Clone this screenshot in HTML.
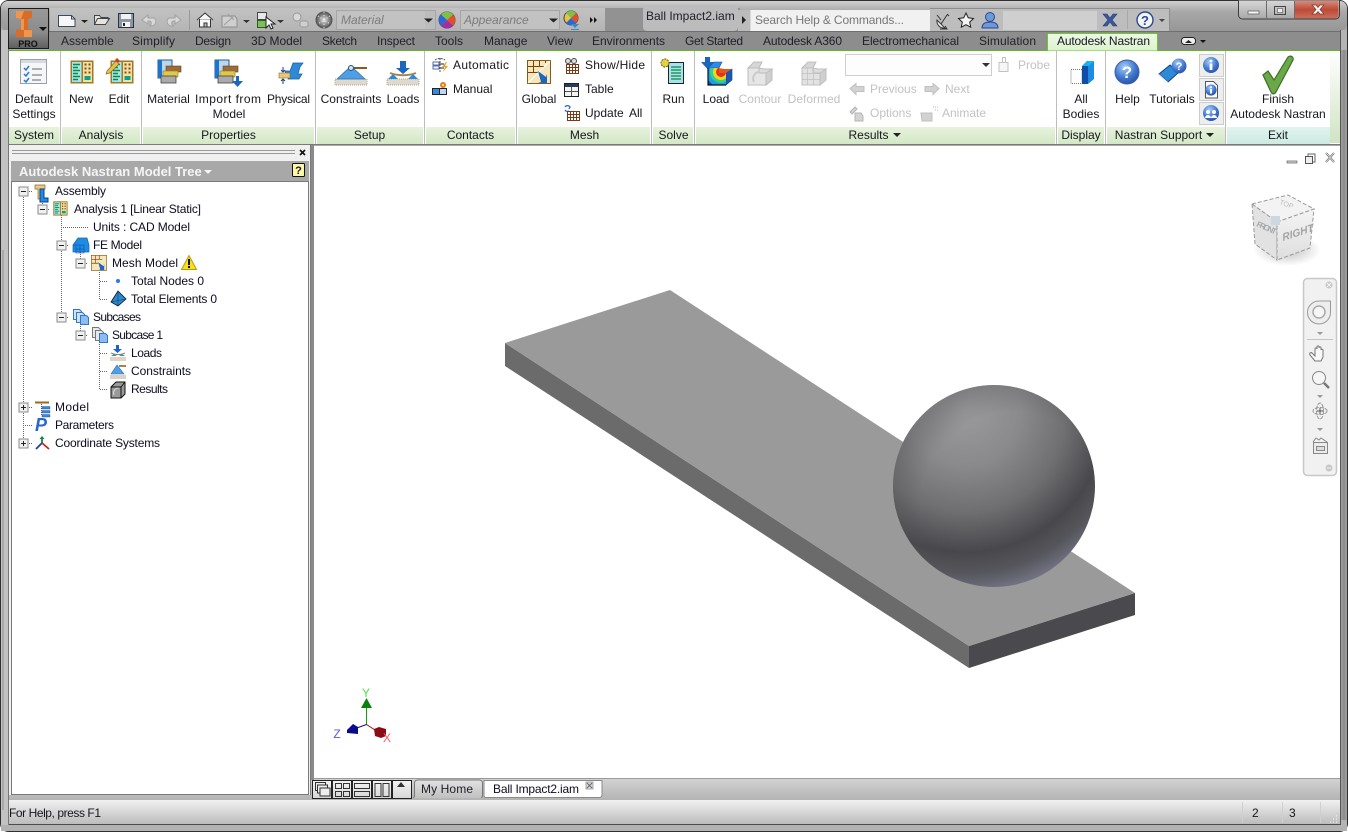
<!DOCTYPE html>
<html lang="en"><head><meta charset="utf-8"><title>Ball Impact2.iam</title>
<style>
html,body{margin:0;padding:0;background:#fff;width:1348px;height:832px;overflow:hidden}
svg{display:block}
text{font-family:"Liberation Sans",sans-serif;font-size:12px;fill:#16161e}
.m{text-anchor:middle}
.g{fill:#c2c2c2}
.tr{fill:#0c0c20}
.tb{fill:#202028}
</style></head><body>
<svg xmlns="http://www.w3.org/2000/svg" width="1348" height="832" viewBox="0 0 1348 832">
<defs>
<linearGradient id="top" x1="0" y1="0" x2="0" y2="1"><stop offset="0" stop-color="#d0d0d0"/><stop offset=".35" stop-color="#a8a8a8"/><stop offset="1" stop-color="#979797"/></linearGradient>
<linearGradient id="qat" x1="0" y1="0" x2="0" y2="1"><stop offset="0" stop-color="#c2c2c2"/><stop offset="1" stop-color="#b4b4b4"/></linearGradient>
<linearGradient id="pl" x1="0" y1="0" x2="0" y2="1"><stop offset="0" stop-color="#e7f2dc"/><stop offset="1" stop-color="#d3e8c6"/></linearGradient>
<linearGradient id="plx" x1="0" y1="0" x2="0" y2="1"><stop offset="0" stop-color="#e2f3ee"/><stop offset="1" stop-color="#cdeae3"/></linearGradient>
<linearGradient id="atab" x1="0" y1="0" x2="0" y2="1"><stop offset="0" stop-color="#eef8e6"/><stop offset="1" stop-color="#dcf3cd"/></linearGradient>
<linearGradient id="edge" x1="0" y1="0" x2="0" y2="1"><stop offset="0" stop-color="#fff"/><stop offset="1" stop-color="#d0e4c4"/></linearGradient>
<linearGradient id="app" x1="0" y1="0" x2="0" y2="1"><stop offset="0" stop-color="#9a9a9a"/><stop offset=".6" stop-color="#8b8b8b"/><stop offset="1" stop-color="#5e5e5e"/></linearGradient>
<linearGradient id="close" x1="0" y1="0" x2="0" y2="1"><stop offset="0" stop-color="#d68a7c"/><stop offset=".5" stop-color="#bf4a36"/><stop offset="1" stop-color="#c9705f"/></linearGradient>
<linearGradient id="ctl" x1="0" y1="0" x2="0" y2="1"><stop offset="0" stop-color="#d8d8d8"/><stop offset="1" stop-color="#a8a8a8"/></linearGradient>
<linearGradient id="strip" x1="0" y1="0" x2="0" y2="1"><stop offset="0" stop-color="#d2d2d2"/><stop offset="1" stop-color="#b4b4b4"/></linearGradient>
<linearGradient id="stat" x1="0" y1="0" x2="0" y2="1"><stop offset="0" stop-color="#f1f1f1"/><stop offset="1" stop-color="#bcbcbc"/></linearGradient>
<linearGradient id="tabg" x1="0" y1="0" x2="0" y2="1"><stop offset="0" stop-color="#e2e2e2"/><stop offset="1" stop-color="#c0c0c0"/></linearGradient>
<linearGradient id="btn" x1="0" y1="0" x2="0" y2="1"><stop offset="0" stop-color="#f4f4f4"/><stop offset="1" stop-color="#d6d6d6"/></linearGradient>
<linearGradient id="fr" x1="0" y1="0" x2="1" y2="0"><stop offset="0" stop-color="#9a9a9a"/><stop offset=".5" stop-color="#7e7e7e"/><stop offset="1" stop-color="#9c9c9c"/></linearGradient>
<radialGradient id="ball" gradientUnits="userSpaceOnUse" cx="965" cy="410" r="185"><stop offset="0" stop-color="#9b9b9e"/><stop offset=".3" stop-color="#8a8a8d"/><stop offset=".55" stop-color="#6f6f72"/><stop offset=".77" stop-color="#48484c"/><stop offset=".88" stop-color="#55555b"/><stop offset="1" stop-color="#77778a"/></radialGradient>
<radialGradient id="rim" cx=".6" cy=".6" r=".62"><stop offset=".75" stop-color="#555" stop-opacity="0"/><stop offset="1" stop-color="#555" stop-opacity=".35"/></radialGradient>
<radialGradient id="blue" cx=".4" cy=".3" r=".75"><stop offset="0" stop-color="#a7cdf6"/><stop offset=".6" stop-color="#3f78d0"/><stop offset="1" stop-color="#2a4f9e"/></radialGradient>
<radialGradient id="wheel" cx=".5" cy=".5" r=".5"><stop offset="0" stop-color="#e2e2e2"/><stop offset="1" stop-color="#555"/></radialGradient>
<radialGradient id="cs" cx=".5" cy=".5" r=".5"><stop offset="0" stop-color="#888" stop-opacity=".55"/><stop offset="1" stop-color="#888" stop-opacity="0"/></radialGradient>
<linearGradient id="cube" x1="0" y1="0" x2="0" y2="1"><stop offset="0" stop-color="#f4f4f4"/><stop offset="1" stop-color="#dedede"/></linearGradient>
<clipPath id="fc"><path d="M0 6H11V11H18V23H0Z"/></clipPath>

<g id="minus"><rect x="-4.5" y="-4.5" width="9" height="9" fill="#f0f0f0" stroke="#8a8a8a"/><path d="M-2.5 0h5" stroke="#222"/></g>
<g id="plus"><rect x="-4.5" y="-4.5" width="9" height="9" fill="#f0f0f0" stroke="#8a8a8a"/><path d="M-2.5 0h5M0-2.5v5" stroke="#222"/></g>
<g id="anal">
 <rect x=".5" y=".5" width="23" height="23" fill="#a07828"/>
 <rect x="2" y="2" width="9.5" height="20" fill="#a8e4f0"/>
 <rect x="13" y="2" width="9" height="20" fill="#f0e2a0"/>
 <path d="M3 4.5h7M3 7.5h5M3 10.5h7M3 13.5h5M3 16.5h7M3 19.5h5" stroke="#0a8a3c" stroke-width="1.4"/>
 <path d="M14.5 3.5h2v2h-2zM18.5 3.5h2v2h-2zM14.5 7.5h2v2h-2zM18.5 7.5h2v2h-2zM14.5 11.5h2v2h-2zM18.5 11.5h2v2h-2z" fill="#8c4a1a"/>
 <rect x="14.5" y="16" width="6" height="4" fill="#0aa08c"/>
</g>
<g id="matl">
 <path d="M1 1h14v18H1z" fill="#bcd6ee" stroke="#235a9c"/><rect x="1" y="1" width="4" height="18" fill="#1d74cc"/>
 <rect x="9" y="7" width="15" height="6" fill="#9c6b3a" stroke="#6a4422" stroke-width=".6"/>
 <rect x="6" y="12" width="15" height="6" fill="#e0c84a" stroke="#8a7a22" stroke-width=".6"/>
 <rect x="4" y="17" width="15" height="7" fill="#aaa" stroke="#444" stroke-width=".8"/>
</g>
<g id="tri">
 <path d="M-16 15h32v6h-32z" fill="#ddd5c6" opacity=".9"/>
 <path d="M-16 15h32v6h-32z" fill="none" stroke="#b5a690" stroke-dasharray="1 1"/>
</g>
<g id="grid">
 <path d="M2 .5h13M2 3.5h13M2 6.5h13M2 9.5h13M2.5 0v10M5.5 0v10M8.5 0v10M11.5 0v10M14.5 0v10" stroke="#7a3a18" stroke-width="1"/>
</g>
<g id="info"><circle cx="0" cy="0" r="8" fill="url(#blue)"/><circle cx="0" cy="-4" r="1.4" fill="#fff"/><rect x="-1.4" y="-1.5" width="2.8" height="6.5" fill="#fff"/></g>
</defs>

<!-- window frame -->
<rect width="1348" height="832" fill="#fff"/>
<rect x=".5" y=".5" width="1347" height="831" rx="8" fill="#a9a9a9" stroke="#2f2f2f"/>
<rect x="1" y="1" width="1346" height="30" rx="7" fill="url(#top)"/>
<rect x="1" y="30" width="8" height="795" fill="#c2c2c2"/>
<rect x="1340" y="30" width="7" height="795" fill="#b4b4b4"/>
<rect x="1" y="825" width="1346" height="6" fill="#b2b2b2"/>
<path d="M8 824.500H1340" stroke="#4c4c4c"/><path d="M1340.500 30V825" stroke="#555"/><path d="M8.500 30V825" stroke="#777"/>
<rect x="2" y="250" width="2" height="560" fill="#8a8a8a" opacity=".45"/>
<rect x="1341" y="50" width="6" height="770" fill="url(#fr)" opacity=".75"/>

<!-- QAT -->
<rect x="50" y="8" width="555" height="24" fill="url(#qat)"/>
<rect x="605" y="8" width="135" height="24" fill="#929292"/>
<rect x="643" y="5" width="95" height="26" rx="4" fill="#bcbcbc"/>
<rect x="738" y="10" width="432" height="22" fill="#bcbcbc"/>
<rect x="750" y="10" width="180" height="21" fill="#f1f1f1"/>
<path d="M750.500 10v21" stroke="#d8d8d8"/>
<rect x="930" y="8" width="240" height="24" fill="#bdbdbd"/>
<rect x="1003" y="11" width="94" height="19" fill="#cfcfcf"/>
<path d="M930 8.500h239.500V31" fill="none" stroke="#8e8e8e"/>
<path d="M1127.500 10v19" stroke="#a8a8a8"/>

<!-- app button -->
<rect x="8.500" y="8.500" width="40" height="40" fill="url(#app)" stroke="#1c1c1c"/>
<path d="M16 11h16v7l-4 1v10l4 1v7H16v-7l5-1V19l-5-1z" fill="#d96c26"/>
<path d="M16 11h8l-3 8-5-1zM24 30h8v7h-8zM21 19h3v11l-3 0z" fill="#f0964c"/>
<path d="M39 27h8l-4 4z" fill="#111"/>
<text x="28" y="47" class="m" style="font-size:9px;font-weight:bold;fill:#111">PRO</text>

<!-- QAT icons -->
<path d="M58.500 15.500h13l3.500 3.500v7.500h-16.500z" fill="#f7f7f7" stroke="#3c4a5c"/><path d="M71.500 15.500v3.500h3.500" fill="none" stroke="#3c4a5c"/>
<path d="M81 20h7l-3.500 3z" fill="#222"/>
<path d="M94.500 24.500v-9h5l1.500 2h7v2M94.500 24.500l3-6h12l-4 6z" fill="#e9e5d6" stroke="#3c4654"/>
<rect x="118.500" y="13.500" width="15" height="14" fill="#8d97a3" stroke="#2a3140"/><rect x="121" y="14" width="10" height="5" fill="#f1f1f1"/><rect x="122" y="22" width="8" height="5" fill="#f4f4f4"/><rect x="123" y="23" width="2" height="3" fill="#222"/>
<path d="M142 20l6-5v3h5c4 0 4 7-1 8h-3c3-1 3-5 0-5h-1v3z" fill="#d8d8d8" stroke="#a2a2a2"/>
<path d="M181 20l-6-5v3h-5c-4 0-4 7 1 8h3c-3-1-3-5 0-5h1v3z" fill="#d8d8d8" stroke="#a2a2a2"/>
<path d="M189.500 10v20" stroke="#9a9a9a"/>
<path d="M197 20l8-7 8 7M199.500 19v8h11v-8M204 27v-4h3v4" fill="#f7f7f7" stroke="#333"/>
<path d="M222 16h13l2 3v8h-15z" fill="#cfcfcf" stroke="#8c8c8c"/><path d="M224 25l9-8M228 14l6 6" stroke="#9e9e9e"/>
<path d="M243 20h7l-3.500 3z" fill="#333"/>
<rect x="257.500" y="12.500" width="9" height="7" fill="#e8e8e8" stroke="#444"/><rect x="257.500" y="20.500" width="9" height="7" fill="#7cc05a" stroke="#2c5e1c"/>
<path d="M266 17l0 11 3-3 2 4 2-1-2-4h4z" fill="#fff" stroke="#222"/>
<path d="M277 20h7l-3.500 3z" fill="#333"/>
<circle cx="297" cy="17" r="4" fill="#d8d8d8" stroke="#999"/><rect x="300" y="21" width="8" height="6" rx="2" fill="#cfcfcf" stroke="#999"/>
<circle cx="324" cy="20" r="8" fill="url(#wheel)" stroke="#555"/>
<path d="M318 16l12 8M330 16l-12 8M324 12v16" stroke="#eee" stroke-dasharray="1 2"/>
<rect x="336.500" y="10.500" width="99" height="19" fill="#c2c2c2" stroke="#a5a5a5"/><rect x="425" y="11" width="10" height="18" fill="#bcbcbc"/>
<path d="M424 18.500h9l-4.500 4z" fill="#222"/>
<text x="341" y="24" style="font-style:italic;fill:#7c7c7c">Material</text>
<circle cx="447" cy="20" r="8" fill="#e5c640" stroke="#444"/>
<path d="M447 20L441 14.500A8 8 0 0 1 453 14.500z" fill="#7fbf4a"/><path d="M447 20L453 14.500A8 8 0 0 1 453 25.500z" fill="#e0502a"/><path d="M447 20L453 25.500A8 8 0 0 1 441 25.500z" fill="#a02ea6"/><path d="M447 20L441 25.500A8 8 0 0 1 441 14.500z" fill="#2a68d8"/>
<rect x="460.500" y="10.500" width="99" height="19" fill="#c2c2c2" stroke="#a5a5a5"/>
<path d="M549 18.500h9l-4.500 4z" fill="#222"/>
<text x="464" y="24" style="font-style:italic;fill:#7c7c7c">Appearance</text>
<circle cx="571" cy="18" r="7" fill="#e5c640" stroke="#444"/><path d="M571 18L566 13A7 7 0 0 1 576 13z" fill="#7fbf4a"/><path d="M571 18L576 13A7 7 0 0 1 576 23z" fill="#e0502a"/><path d="M571 18L576 23A7 7 0 0 1 566 23z" fill="#2a68d8"/>
<path d="M571 24h8l-4 4zM571 29h8v1h-8z" fill="#3a8ac4"/>
<path d="M590 17l3 3-3 3zM594 17l3 3-3 3z" fill="#111"/>
<text x="646" y="20" class="tb">Ball Impact2.iam</text>
<path d="M742 16l4 4-4 4z" fill="#222"/>
<text x="755" y="24" style="fill:#777" textLength="149">Search Help &amp; Commands...</text>

<!-- comm center icons -->
<path d="M937 20a7 7 0 0 0 8 8zM941 24l6-9M937 15l4 5M940 29h7l-2-3M947 14l2 2" fill="#eee" stroke="#333"/>
<path d="M966 13l2.300 4.800 5.200.7-3.800 3.600 1 5.100-4.700-2.500-4.700 2.500 1-5.100-3.800-3.600 5.200-.7z" fill="#f4f4f4" stroke="#222"/>
<circle cx="990" cy="17" r="4.500" fill="#6f98d8" stroke="#2a4a8e"/><path d="M982 28c0-5 4-6 8-6s8 1 8 6z" fill="#6f98d8" stroke="#2a4a8e"/>
<path d="M1103 14h4l3 4 3-4h4l-5 6 5 6h-4l-3-4-3 4h-4l5-6z" fill="#3a5a9e" stroke="#223c74" stroke-width=".6"/>
<circle cx="1145" cy="20" r="8" fill="#f4f4f4" stroke="#2a4a8e" stroke-width="1.400"/>
<text x="1145" y="25" class="m" style="font-size:13px;font-weight:bold;fill:#2a4aa0">?</text>
<path d="M1159 19h6l-3 3z" fill="#444"/>

<!-- window controls -->
<path d="M1238.500 0v15a4 4 0 0 0 4 4h93a4 4 0 0 0 4-4V0z" fill="url(#ctl)" stroke="#3c3c3c"/>
<path d="M1294 1v17.500h41a3.500 3.500 0 0 0 3.500-3.500V1z" fill="url(#close)"/>
<path d="M1266.500 1v18M1294.500 1v18" stroke="#6c6c6c"/>
<rect x="1248" y="11" width="11" height="3" fill="#f4f4f4" stroke="#555" stroke-width=".7"/>
<rect x="1274.500" y="6.500" width="11" height="8" fill="none" stroke="#444" stroke-width="1"/><rect x="1277.500" y="8.500" width="5" height="4" fill="#eee" stroke="#555" stroke-width=".6"/>
<path d="M1312 5h4l2 2.500L1320 5h4l-4 4.500 4 4.500h-4l-2-2.500-2 2.500h-4l4-4.500z" fill="#f6f6f6" stroke="#7a3a2c" stroke-width=".7"/>

<!-- tab row -->
<rect x="49" y="32" width="1291" height="19" fill="#8d8d8d"/>
<path d="M49 31.500h1291" stroke="#6f6f6f"/>
<text x="61" y="45" class="tb">Assemble</text><text x="132" y="45" class="tb" textLength="43">Simplify</text><text x="195" y="45" class="tb" textLength="36">Design</text><text x="251" y="45" class="tb" textLength="51">3D Model</text><text x="322" y="45" class="tb" textLength="35">Sketch</text><text x="377" y="45" class="tb" textLength="38">Inspect</text><text x="435" y="45" class="tb">Tools</text><text x="484" y="45" class="tb">Manage</text><text x="547" y="45" class="tb">View</text><text x="592" y="45" class="tb" textLength="73">Environments</text><text x="685" y="45" class="tb" textLength="58">Get Started</text><text x="763" y="45" class="tb" textLength="79">Autodesk A360</text><text x="862" y="45" class="tb" textLength="97">Electromechanical</text><text x="979" y="45" class="tb" textLength="57">Simulation</text>
<path d="M1047.500 51V34.500a1 1 0 0 1 1-1h108a1 1 0 0 1 1 1V51z" fill="url(#atab)" stroke="#6cc828"/>
<text x="1057" y="45" textLength="93">Autodesk Nastran</text>
<rect x="1181.500" y="37.500" width="14" height="7" rx="3" fill="#efefef" stroke="#222"/><path d="M1185 43h7l-3.500-3z" fill="#222"/>
<path d="M1200 40h6l-3 3z" fill="#111"/>

<!-- ribbon -->
<rect x="9" y="51" width="1331" height="94" fill="#fff"/>
<rect x="1330" y="51" width="10" height="92" fill="url(#edge)"/>
<path d="M9 50.500h1038M1157 50.500h183" stroke="#62b822"/>
<g>
<rect x="9" y="127" width="50.500" height="17" fill="url(#pl)"/><rect x="62" y="127" width="78" height="17" fill="url(#pl)"/><rect x="143" y="127" width="171" height="17" fill="url(#pl)"/><rect x="317" y="127" width="106" height="17" fill="url(#pl)"/><rect x="426" y="127" width="89" height="17" fill="url(#pl)"/><rect x="518" y="127" width="132" height="17" fill="url(#pl)"/><rect x="653" y="127" width="40" height="17" fill="url(#pl)"/><rect x="696" y="127" width="359" height="17" fill="url(#pl)"/><rect x="1058" y="127" width="46" height="17" fill="url(#pl)"/><rect x="1107" y="127" width="118" height="17" fill="url(#pl)"/><rect x="1227" y="127" width="103" height="17" fill="url(#plx)"/>
</g>
<path d="M60.500 51v93M141.500 51v93M315.500 51v93M424.500 51v93M516.500 51v93M651.500 51v93M694.500 51v93M1056.500 51v93M1105.500 51v93M1225.500 51v93" stroke="#bdbdbd"/>
<path d="M9 144.500h1331" stroke="#7a7a7a"/>

<g>
<text x="34" y="103" class="m">Default</text><text x="34" y="118" class="m">Settings</text>
<text x="81" y="103" class="m">New</text><text x="119" y="103" class="m">Edit</text>
<text x="168.500" y="103" class="m">Material</text><text x="228" y="103" class="m" textLength="66">Import from</text><text x="229" y="118" class="m">Model</text><text x="288.500" y="103" class="m" textLength="43">Physical</text>
<text x="351" y="103" class="m">Constraints</text><text x="403" y="103" class="m">Loads</text>
<text x="539" y="103" class="m">Global</text><text x="673.500" y="103" class="m">Run</text><text x="716" y="103" class="m">Load</text>
<text x="760" y="103" class="m g">Contour</text><text x="814" y="103" class="m g">Deformed</text>
<text x="1081" y="103" class="m">All</text><text x="1081" y="118" class="m">Bodies</text>
<text x="1127.500" y="103" class="m">Help</text><text x="1172" y="103" class="m">Tutorials</text>
<text x="1278" y="103" class="m">Finish</text><text x="1278" y="118" class="m">Autodesk Nastran</text>
<text x="34" y="139" class="m">System</text><text x="101" y="139" class="m">Analysis</text><text x="228.500" y="139" class="m">Properties</text><text x="369.500" y="139" class="m">Setup</text><text x="470.500" y="139" class="m">Contacts</text><text x="584.500" y="139" class="m">Mesh</text><text x="673.500" y="139" class="m">Solve</text><text x="868.500" y="139" class="m">Results</text><text x="1081" y="139" class="m">Display</text><text x="1158.500" y="139" class="m">Nastran Support</text><text x="1278" y="139" class="m">Exit</text>
</g>
<path d="M893 133h8l-4 4zM1206 133h8l-4 4z" fill="#222"/>
<text x="453" y="69" textLength="56">Automatic</text><text x="453" y="93">Manual</text>
<text x="585" y="69" textLength="60">Show/Hide</text><text x="585" y="93">Table</text><text x="585" y="117">Update</text><text x="629" y="117">All</text>
<text x="1018" y="69" class="g">Probe</text><text x="870" y="93" class="g">Previous</text><text x="945" y="93" class="g">Next</text><text x="870" y="117" class="g">Options</text><text x="942" y="117" class="g">Animate</text>

<!-- Ribbon icons -->
<g transform="translate(20,59)"><rect x=".5" y=".5" width="26" height="24" fill="#f4f6fa" stroke="#9aa0a8"/><rect x="1" y="1" width="25" height="3" fill="#d6dbe2"/><path d="M4 9l2 2 3-4M4 15l2 2 3-4M4 21l2 2 3-4" fill="none" stroke="#2c78c8" stroke-width="1.500"/><path d="M12 10h10M12 16h10M12 21h9" stroke="#666"/></g>
<use href="#anal" x="70" y="60"/><use href="#anal" x="110" y="60"/>
<path d="M107 71l9-10 3 3-9 9-4 1z" fill="#e8c040" stroke="#8a6a20" stroke-width=".7"/><path d="M115 60l2-2 3 3-2 2z" fill="#d83a1a"/>
<use href="#matl" x="157" y="59"/><use href="#matl" x="214" y="59"/><path d="M232 81h4v-5h3v5h4l-5.500 6z" fill="#1c66c0"/>
<g transform="translate(279,62)"><path d="M6 9l5 0 3-8h10l-3 4-2 7h4l-3 5H9l2-5H7z" fill="#2d8ad8" stroke="#1a5a9c" stroke-width=".7"/><rect x="0" y="11" width="11" height="5" fill="#e8c878" stroke="#8a6a28" stroke-width=".6"/><path d="M4 5v5M4 17v5M2 8l2 2 2-2M2 19l2-2 2 2" fill="none" stroke="#1c3a8a"/></g>
<g transform="translate(351,64)"><use href="#tri"/><path d="M0 2L-14 15H14z" fill="#4f9fe4" stroke="#2a6cae" stroke-width=".7"/><circle cx="0" cy="4" r="2.500" fill="#cfe4f6" stroke="#26507e"/><path d="M3 4h13" stroke="#8a5a1a" stroke-width="2"/></g>
<g transform="translate(403,64)"><use href="#tri"/><path d="M-3-3h6v7h4L0 10-7 4h4z" fill="#1c66c0"/><path d="M-13 9c8 3 18 3 26 0" fill="none" stroke="#a8824a" stroke-width="2"/><path d="M-15 15l5-5 5 5zM5 15l5-5 5 5z" fill="#2d8ad8"/></g>
<g transform="translate(432,57)"><path d="M1 7h11M1 11h11" stroke="#223"/><rect x="1" y="5" width="6" height="3" fill="#fff" stroke="#2a4a8e" stroke-width=".8"/><rect x="1" y="9" width="6" height="3" fill="#fff" stroke="#2a4a8e" stroke-width=".8"/><path d="M3 3a7 5 0 0 1 10 0M8 1v14" stroke="#555" stroke-dasharray="2 1" fill="none"/><path d="M14 5l-4 5h3l-2 5 5-6h-3l2-4z" fill="#f0a020"/></g>
<g transform="translate(432,81)"><rect x=".5" y="7.500" width="7" height="6" fill="#3a88d8" stroke="#222"/><rect x="7.500" y="7.500" width="7" height="6" fill="#bcd8f0" stroke="#223"/><circle cx="11" cy="4" r="3" fill="#f07020"/><circle cx="11" cy="4" r="1.300" fill="#fbe24a"/></g>
<g transform="translate(527,60)"><rect x=".5" y=".5" width="23" height="23" fill="#f6e7ba" stroke="#8a5a18"/><path d="M6.500 1v12M12.500 1v6M18.500 1v2M1 6.500h16M1 12.500h10" stroke="#7a4010"/><path d="M1 23L23 1" stroke="#fff"/><path d="M11 11l8 6 1-3v9h-9l3-1z" fill="#1c66c0"/></g>
<g transform="translate(564,58)"><circle cx="4" cy="3" r="2.500" fill="#ddd" stroke="#444"/><circle cx="10" cy="3" r="2.500" fill="#ddd" stroke="#444"/><use href="#grid" x="0" y="6"/></g>
<g transform="translate(564,83)"><rect x=".5" y=".5" width="14" height="13" fill="#f4f4f4" stroke="#222"/><rect x="1" y="1" width="13" height="3" fill="#2a3a5e"/><path d="M1 8.500h13M7.500 4v9" stroke="#555"/></g>
<g transform="translate(564,104)"><path d="M1 3a3 3 0 0 1 5 0l-1 2M5 7a3 3 0 0 1-4-1" fill="none" stroke="#2a68d8" stroke-width="1.300"/><use href="#grid" x="1" y="7"/></g>
<g transform="translate(659,58)"><rect x="9.500" y="4.500" width="15" height="21" fill="#a8e2ef" stroke="#222"/><path d="M12 9h10M12 12h10M12 15h10M12 18h10M12 21h10" stroke="#0a8a3c" stroke-width="1.200"/><circle cx="6" cy="5" r="4" fill="#e4d040" stroke="#6a5a10" stroke-dasharray="2 1"/></g>
<!-- Load -->
<path d="M705 57h5v5h4l-6.500 7-6.500-7h4z" fill="#1c66c0"/>
<g transform="translate(708,62)">
 <path d="M0 6L6 0H14L11 6Z" fill="#2c8ae8" stroke="#1c4a9c" stroke-width=".6"/>
 <path d="M18 11L24 7V18L18 23Z" fill="#1a58b8" stroke="#123c80" stroke-width=".6"/>
 <path d="M11 6V11H18L24 7H16z" fill="#e05a20"/>
 <g clip-path="url(#fc)"><rect width="18" height="23" fill="#1040c8"/><circle cx="13" cy="10" r="15" fill="#18a0e0"/><circle cx="13" cy="10" r="11" fill="#38d088"/><circle cx="13" cy="10" r="8" fill="#f0d820"/><circle cx="13" cy="10" r="5" fill="#e83018"/></g>
 <path d="M0 6V23H18" fill="none" stroke="#111" stroke-width="1.200"/>
</g>
<!-- Contour -->
<g transform="translate(748,62)" stroke="#bdbdbd">
 <path d="M0 6L6 0H14L11 6Z" fill="#d6d6d6"/><path d="M18 11L24 7V18L18 23Z" fill="#cfcfcf"/><path d="M11 6V11H18L24 7H16z" fill="#dcdcdc"/><path d="M0 6H11V11H18V23H0Z" fill="#e6e6e6"/>
 <path d="M6 20a7 7 0 0 1 4-10" fill="none" stroke="#cacaca" stroke-width="2"/>
</g>
<!-- Deformed -->
<g transform="translate(802,62)" stroke="#c0c0c0">
 <path d="M0 6L6 0H14L11 6Z" fill="#d6d6d6"/><path d="M18 11L24 7V18L18 23Z" fill="#cfcfcf"/><path d="M11 6V11H18L24 7H16z" fill="#dcdcdc"/><path d="M0 6H11V11H18V23H0Z" fill="#e2e2e2"/>
 <path d="M0 11.500H18M0 17.500H18M5.500 6V23M11.500 6V23" fill="none" stroke-width=".7"/>
</g>
<rect x="845.500" y="54.500" width="146" height="21" fill="#fdfdfd" stroke="#cfcfcf"/><path d="M982 63h8l-4 4z" fill="#333"/>
<rect x="1002.500" y="57.500" width="3" height="5" fill="none" stroke="#c2c2c2"/><rect x="999" y="62.500" width="9" height="9" fill="#f6f6f6" stroke="#c2c2c2"/>
<path d="M850 88.500l6-5v3h8v5h-8v3z" fill="#d2d2d2" stroke="#c0c0c0"/>
<path d="M939 88.500l-6-5v3h-8v5h8v3z" fill="#d2d2d2" stroke="#c0c0c0"/>
<path d="M850 112l5-5 2 2-5 5zM855 113h6l2 3v5h-8z" fill="#d4d4d4" stroke="#b4b4b4"/>
<path d="M921 113h11v8h-10z" fill="#d2d2d2" stroke="#c0c0c0" /><path d="M933 107h5M935 110h3" stroke="#bcbcbc" stroke-dasharray="1 1"/>
<g transform="translate(1070,60)"><path d="M1 9.500h11v14H1z" fill="#fff" stroke="#777" stroke-dasharray="1 1"/><path d="M12 6l5-5h7v18l-6 5h-6z" fill="#1c8ce4"/><path d="M12 6h6v18h-6z" fill="#0f4fa8"/><path d="M18 1h6l-5 5h-7z" fill="#14b4f4"/></g>
<circle cx="1127" cy="72" r="12" fill="url(#blue)" stroke="#3a5ea8"/>
<text x="1127" y="78" class="m" style="font-size:17px;font-weight:bold;fill:#fff">?</text>
<g transform="translate(1158,58)"><path d="M1 16l11-9 8 8-10 9z" fill="#2d8ad8" stroke="#103e80"/><path d="M1 16l9 8v1L0 17z" fill="#dfe8f0"/><circle cx="21" cy="8" r="7.500" fill="url(#blue)"/><text x="21" y="12" class="m" style="font-size:11px;font-weight:bold;fill:#fff">?</text></g>
<rect x="1199.500" y="54.500" width="24" height="22" fill="#eee" stroke="#ccc"/><rect x="1199.500" y="78.500" width="24" height="22" fill="#eee" stroke="#ccc"/><rect x="1199.500" y="102.500" width="24" height="22" fill="#eee" stroke="#ccc"/>
<use href="#info" x="1211" y="65"/>
<path d="M1205.500 81.500h8l4 4v12.500h-12z" fill="#fff" stroke="#555"/><g transform="translate(1211,90) scale(.7)"><use href="#info"/></g>
<circle cx="1211" cy="113" r="8" fill="url(#blue)"/><circle cx="1208" cy="112" r="2" fill="#fff"/><circle cx="1214" cy="112" r="2" fill="#fff"/><path d="M1205 118a3 3 0 0 1 6 0zM1211 118a3 3 0 0 1 6 0z" fill="#fff"/>
<path d="M1263 75l5-4 6 9 14-23c3-2 6 0 5 3l-17 32c-2 3-4 2-5 0z" fill="#6aa84a" stroke="#3a7026" stroke-width="1.200"/>

<!-- lower bars -->
<rect x="9" y="779" width="1331" height="21" fill="url(#strip)"/>
<rect x="9" y="800" width="1331" height="24" fill="url(#stat)"/>

<!-- left pane -->
<rect x="9" y="145" width="301" height="650" fill="#f0f0f0"/>
<path d="M12 150.500h283M12 153.500h283" stroke="#9a9a9a"/>
<path d="M300 150l5 5M305 150l-5 5" stroke="#111" stroke-width="1.600"/>
<rect x="11" y="161" width="298" height="20" fill="#a8a8a8"/>
<text x="19" y="176" style="font-size:13px;font-weight:bold;fill:#f5f5f5">Autodesk Nastran Model Tree</text>
<path d="M204 170h8l-4 4z" fill="#f5f5f5"/>
<rect x="292.500" y="163.500" width="12" height="13" rx="1" fill="#fdf7a8" stroke="#111"/><text x="298.500" y="174" class="m" style="font-size:11px;font-weight:bold">?</text>
<rect x="11.500" y="181.500" width="297" height="613" fill="#fff" stroke="#7a7a7a"/>

<g stroke="#666" stroke-dasharray="1 1" fill="none">
<path d="M23.500 191v252M42.500 195v10M61.500 215v102M80.500 252v7M80.500 324v7M99.500 272v27M99.500 344v45"/>
<path d="M23 191.500h9M42 209.500h8M61 227.500h28M61 245.500h8M61 317.500h8M80 263.500h8M80 335.500h8M100 281.500h8M100 299.500h8M100 353.500h8M100 371.500h8M100 389.500h8M23 407.500h9M23 425.500h9M23 443.500h9"/>
</g>
<use href="#minus" x="23.500" y="191.500"/><use href="#minus" x="42.500" y="209.500"/><use href="#minus" x="61.500" y="245.500"/><use href="#minus" x="80.500" y="263.500"/><use href="#minus" x="61.500" y="317.500"/><use href="#minus" x="80.500" y="335.500"/><use href="#plus" x="23.500" y="407.500"/><use href="#plus" x="23.500" y="443.500"/>

<text x="55" y="195" class="tr" textLength="51">Assembly</text>
<text x="74" y="213" class="tr" textLength="127">Analysis 1 [Linear Static]</text>
<text x="93" y="231" class="tr" textLength="97">Units : CAD Model</text>
<text x="93" y="249" class="tr" textLength="49">FE Model</text>
<text x="112" y="267" class="tr" textLength="66">Mesh Model</text>
<text x="131" y="285" class="tr" textLength="73">Total Nodes 0</text>
<text x="131" y="303" class="tr" textLength="86">Total Elements 0</text>
<text x="93" y="321" class="tr" textLength="48">Subcases</text>
<text x="112" y="339" class="tr" textLength="51">Subcase 1</text>
<text x="131" y="357" class="tr" textLength="31">Loads</text>
<text x="131" y="375" class="tr" textLength="60">Constraints</text>
<text x="131" y="393" class="tr" textLength="37">Results</text>
<text x="55" y="411" class="tr" textLength="34">Model</text>
<text x="55" y="429" class="tr" textLength="59">Parameters</text>
<text x="55" y="447" class="tr" textLength="105">Coordinate Systems</text>

<!-- Tree icons -->
<g transform="translate(34,183)"><path d="M1 2h10v4H8v10H4V6H1z" fill="#e8c888" stroke="#8a6a2a" stroke-width=".7"/><path d="M6 6h4v9h4v4H6z" fill="#1c8ce4" stroke="#103e80"/></g>
<use href="#anal" transform="translate(53,201) scale(.62)"/>
<g transform="translate(72,237)"><path d="M1 8l5-7h9l2 7v7H1z" fill="#1c8ce4" stroke="#2060a8" stroke-width=".7"/><path d="M4 8h8v8H4zM1 8h9M4 12h8M8 8v8" fill="none" stroke="#0f4fa8" stroke-width=".6"/></g>
<g transform="translate(91,255) scale(.66)"><rect x=".5" y=".5" width="23" height="23" fill="#f6e7ba" stroke="#8a5a18"/><path d="M6.500 1v12M12.500 1v6M1 6.500h16M1 12.500h10" stroke="#7a4010"/><path d="M11 11l8 6 1-3v9h-9l3-1z" fill="#1c66c0"/></g>
<path d="M189 255.500l7.500 14h-15z" fill="#f8e020" stroke="#b89a10"/><rect x="188" y="259" width="2" height="6" fill="#111"/><rect x="188" y="266" width="2" height="2" fill="#111"/>
<circle cx="118" cy="281" r="2" fill="#2a78e8"/>
<g transform="translate(110,291)"><path d="M8 0l8 8-8 7-7-4z" fill="#2a8ad0" stroke="#111" stroke-width=".8"/><path d="M8 0l0 15M1 11l15-3" stroke="#0c3a70" stroke-width=".6"/></g>
<g transform="translate(73,309)" fill="#cfe2f6" stroke="#2a78d0"><path d="M.5.500h6l2 2v8h-8z"/><path d="M3.500 3.500h6l2 2v8h-8z"/><path d="M7.500 6.500h6l2 2v7h-8z" fill="#8fbcee"/></g>
<g transform="translate(92,327)"><path d="M.5.500h6l2 2v8h-8z" fill="#e8e8e8" stroke="#777"/><path d="M3.500 3.500h6l2 2v8h-8z" fill="#e8e8e8" stroke="#777"/><path d="M7.500 6.500h6l2 2v7h-8z" fill="#8fbcee" stroke="#2a78d0"/></g>
<g transform="translate(110,345)"><path d="M6 0h3v4h3l-4.500 4-4.500-4h3z" fill="#1c66c0"/><path d="M1 8c4 2 10 2 14 0" stroke="#a8824a" fill="none"/><path d="M1 11l3-2 3 2zM9 11l3-2 3 2z" fill="#2d8ad8"/><rect x="0" y="12" width="16" height="4" fill="#ddd5c6"/></g>
<g transform="translate(110,363)"><path d="M7 2L1 11h13z" fill="#4f9fe4" stroke="#2a6cae" stroke-width=".6"/><path d="M9 3h7" stroke="#8a5a1a" stroke-width="1.500"/><rect x="0" y="12" width="16" height="4" fill="#d9d2c8"/></g>
<g transform="translate(110,381)"><path d="M1 6l5-5h9v12l-4 4H1z" fill="#9a9a9a" stroke="#111"/><path d="M1 6h10v11M11 6l4-5" fill="none" stroke="#111"/><path d="M4 14a5 5 0 0 1 5-7" fill="none" stroke="#ddd"/></g>
<g transform="translate(35,401)"><path d="M0 .5h14v2H0z" fill="#9c6a1c"/><path d="M6.500 3v11" stroke="#555" stroke-dasharray="1 1"/><path d="M7 5.500h8v2.500H7zM7 9.500h8v2.500H7zM7 13.500h8v2.500H7z" fill="#3a88d8" stroke="#1c4a8e" stroke-width=".4"/></g>
<text x="35" y="431" style="font-size:18px;font-weight:bold;font-style:italic;fill:#2a68c8">P</text>
<g transform="translate(35,436)" fill="none" stroke-width="1.800"><path d="M7 7V1" stroke="#0a8a3c"/><path d="M7 7l-6 6" stroke="#1c3ac0"/><path d="M7 7l7 6" stroke="#c0281c"/><path d="M4.500 3L7 0l2.500 3z" fill="#0a8a3c" stroke="none"/></g>

<!-- Viewport -->
<rect x="310" y="145" width="4" height="635" fill="#8a8a8a"/><path d="M310.500 145v650" stroke="#7a7a7a"/>
<rect x="314" y="146" width="1026" height="633" fill="#fff"/>
<path d="M314 778.500h1026" stroke="#9a9a9a"/>
<path d="M1287 161h10v2h-10z" fill="#d8d8d8" stroke="#666" stroke-width=".7"/>
<rect x="1308" y="154" width="7" height="8" fill="none" stroke="#666"/><rect x="1305.500" y="156.500" width="7" height="7" fill="#eee" stroke="#555"/>
<path d="M1326 153l8 9M1334 153l-8 9" stroke="#666" stroke-width="2"/><path d="M1326 153l8 9M1334 153l-8 9" stroke="#eee" stroke-width=".7"/>

<!-- model -->
<path d="M505 343L969 646V668L505 366z" fill="#6b6b6c"/>
<path d="M969 646L1135 593V615L969 668z" fill="#4a4a4e"/>
<path d="M505 343L670 290L1135 593L969 646z" fill="#9a9a9a"/>
<circle cx="994" cy="486" r="101" fill="url(#ball)"/>
<circle cx="994" cy="486" r="101" fill="url(#rim)"/>

<!-- view cube -->
<ellipse cx="1287" cy="250" rx="34" ry="16" fill="url(#cs)"/>
<path d="M1252 204L1288 195L1314 209L1277 222z" fill="#f3f3f3" stroke="#9a9a9a" stroke-dasharray="4 2"/>
<path d="M1252 204L1277 222L1277 260L1255 244z" fill="#e2e2e2" stroke="#9a9a9a" stroke-dasharray="4 2"/>
<path d="M1277 222L1314 209L1310 248L1277 260z" fill="url(#cube)" stroke="#9a9a9a" stroke-dasharray="4 2"/>
<rect x="1271" y="216" width="9" height="9" fill="#cdd7e0"/>
<text transform="translate(1283,241) rotate(-18) skewX(-8)" style="font-size:10.500px;font-weight:bold;font-style:italic;fill:#a4a4a4">RIGHT</text>
<text transform="translate(1256,226) rotate(24)" style="font-size:8px;font-weight:bold;fill:#a8a8a8" textLength="21">FRONT</text>
<text transform="translate(1279,204) rotate(20)" style="font-size:7px;fill:#bbb">TOP</text>

<!-- nav bar -->
<rect x="1303.500" y="278.500" width="33" height="197" rx="4" fill="#f1f1f1" stroke="#c8c8c8" stroke-width="1.500"/>
<circle cx="1329" cy="285" r="3.500" fill="#c8c8c8"/><path d="M1327 283l4 4M1331 283l-4 4" stroke="#f4f4f4"/>
<path d="M1319 301a11.500 11.500 0 1 0 11.500 11.500V301z" fill="#eee" stroke="#999"/><circle cx="1319" cy="312" r="6" fill="#f6f6f6" stroke="#aaa" stroke-width="1.500"/>
<path d="M1317 332h6l-3 3z" fill="#999"/><path d="M1307 339.500h26" stroke="#c4c4c4"/>
<path d="M1315 361l-5-6c-1-2 1-3 2-2l3 3v-7c0-1.500 2-1.500 2 0v-2c0-1.500 2-1.500 2 0v1c0-1.500 2-1.500 2 0v2c0-1 2-1 2 0v7l-2 4z" fill="#f8f8f8" stroke="#777"/>
<circle cx="1319" cy="378" r="6.500" fill="#f6f6f6" stroke="#888"/><path d="M1324 383l5 5" stroke="#777" stroke-width="2.500"/>
<path d="M1317 395h6l-3 3z" fill="#999"/>
<ellipse cx="1320" cy="411" rx="7" ry="3.500" fill="none" stroke="#999" stroke-dasharray="4 1"/><ellipse cx="1320" cy="411" rx="3.500" ry="8" fill="none" stroke="#999" stroke-dasharray="4 1"/><path d="M1317 411h6M1320 408v6" stroke="#555"/>
<path d="M1317 428h6l-3 3z" fill="#999"/>
<rect x="1313.500" y="442.500" width="14" height="11" fill="#ececec" stroke="#888"/><rect x="1316.500" y="446.500" width="8" height="4" fill="#ddd" stroke="#888"/><path d="M1313 442l3-4 3 2 2-2 6 4" fill="none" stroke="#888"/>
<circle cx="1329" cy="468" r="3.500" fill="#c8c8c8"/><path d="M1327 468h4" stroke="#f4f4f4"/>

<!-- triad -->
<path d="M366.500 707v18" stroke="#0ca00c"/>
<path d="M366.500 724.500L354 729" stroke="#10108c"/><path d="M366.500 724.500L375 730" stroke="#a01010"/>
<path d="M366.500 698l5.500 10h-11z" fill="#0a820a"/>
<path d="M347 730l6-6 5 3v7l-11-1z" fill="#0a0a8c"/>
<path d="M374 729l5-2 7 2 0 7-5 2-6-2z" fill="#8c0c14"/>
<text x="366" y="697" class="m" style="font-size:12px;fill:#4de04d">Y</text>
<text x="337" y="738" class="m" style="font-size:12px;fill:#5858f0">Z</text>
<text x="387" y="742" class="m" style="font-size:12px;fill:#f06068">X</text>

<!-- tab strip -->
<g stroke="#222" fill="url(#btn)"><rect x="312.500" y="780.500" width="19" height="18"/><rect x="332.500" y="780.500" width="19" height="18"/><rect x="352.500" y="780.500" width="19" height="18"/><rect x="372.500" y="780.500" width="19" height="18"/><rect x="392.500" y="780.500" width="19" height="18"/></g>
<g fill="none" stroke="#333"><rect x="315.500" y="782.500" width="10" height="8"/><rect x="317.500" y="785" width="10" height="8" fill="#eee"/><rect x="320" y="788" width="10" height="8" fill="#eee"/>
<rect x="335.500" y="783.500" width="6" height="5"/><rect x="343.500" y="783.500" width="6" height="5"/><rect x="335.500" y="791.500" width="6" height="5"/><rect x="343.500" y="791.500" width="6" height="5"/>
<rect x="354.500" y="783.500" width="15" height="5"/><rect x="354.500" y="791.500" width="15" height="5"/>
<rect x="375" y="783.500" width="6" height="13"/><rect x="383" y="783.500" width="6" height="13"/></g>
<path d="M397 787h8l-4-5z" fill="#333"/>
<path d="M413.500 798l1-2v-13a3 3 0 0 1 3-3h62a3 3 0 0 1 3 3v13l-1 2" fill="url(#tabg)" stroke="#777"/>
<text x="421" y="793" class="tb" textLength="52">My Home</text>
<path d="M485 797.500a3 3 0 0 1-1-2V780.500h118v15a3 3 0 0 1-2 2z" fill="#fff" stroke="#8a8a8a"/>
<text x="493" y="793" class="tr" textLength="86">Ball Impact2.iam</text>
<rect x="586" y="782" width="7" height="7" fill="#ddd" stroke="#888" stroke-width=".7"/><path d="M587 783l5 5M592 783l-5 5" stroke="#666"/>

<!-- status -->
<text x="9" y="817" textLength="92">For Help, press F1</text>
<path d="M1242.500 802v21M1282.500 802v21M1320.500 802v21" stroke="#d0d0d0"/>
<text x="1252" y="817">2</text><text x="1289" y="817">3</text>
<path d="M1330 822h1M1333 822h1M1336 822h1M1333 819h1M1336 819h1M1336 816h1" stroke="#f8f8f8"/>
</svg>
</body></html>
